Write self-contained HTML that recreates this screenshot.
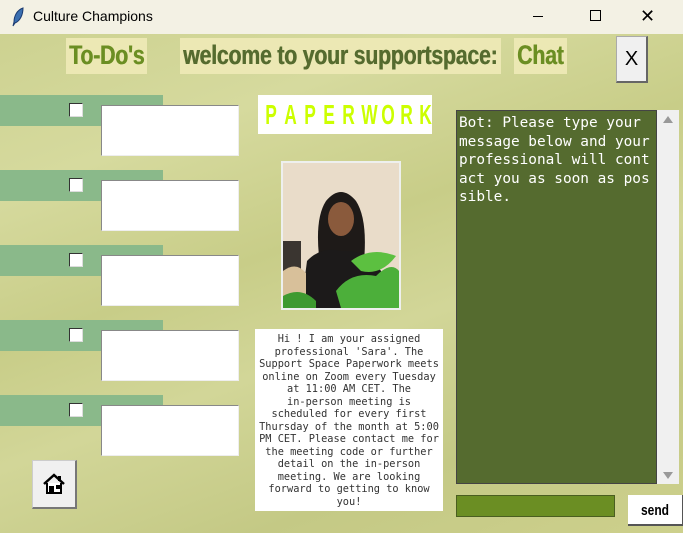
<!DOCTYPE html>
<html><head><meta charset="utf-8"><style>
*{margin:0;padding:0;box-sizing:border-box}
body{width:683px;height:533px;overflow:hidden;position:relative;font-family:"Liberation Sans",sans-serif;
background:linear-gradient(160deg,#cbd08e 0%,#d6da9e 25%,#c8cd88 45%,#d2d698 60%,#c4c985 80%,#cdd08c 100%)}
.a{position:absolute}
.tb{left:0;top:0;width:683px;height:34px;background:#f3f1e4;font-size:14px;color:#000}
.box{background:#ece8b4;height:36px;top:38px}
.lt{font-weight:bold;font-size:27px;line-height:36px;white-space:nowrap;transform:scaleX(0.79);transform-origin:left center;top:37px;letter-spacing:-0.3px;text-shadow:0.6px 0 0 currentColor}
.bar{left:0;width:163px;height:31px;background:#8ab98a}
.cb{left:69px;width:14px;height:14px;background:#fff;border:1px solid #333;border-right-color:#ddd;border-bottom-color:#ddd}
.en{left:101px;width:138px;height:51px;background:#fff;border:1px solid #888;border-right-color:#eee;border-bottom-color:#eee}
.mono{font-family:"DejaVu Sans Mono","Liberation Mono",monospace;white-space:pre}
.pw{display:flex;justify-content:space-between;left:263px;top:95px;width:166px;height:39px;align-items:center}
.pw span{display:inline-block;width:12px;font-weight:bold;font-size:28px;color:#ccff00;transform:scaleX(0.62);text-align:center}
</style></head><body>
<div class="a tb">
<svg class="a" style="left:11px;top:7px" width="14" height="20" viewBox="0 0 14 20"><path d="M12 1C6 3 3 9 3 15l-1 4 2-3c5-2 8-8 8-15z" fill="#3a6fb0" stroke="#1a3a70" stroke-width="1"/></svg>
<div class="a" style="left:33px;top:8px">Culture Champions</div>
<div class="a" style="left:533px;top:16px;width:10px;height:1px;background:#000"></div>
<div class="a" style="left:590px;top:10px;width:11px;height:11px;border:1px solid #000"></div>
<div class="a" style="left:640px;top:6px;font-size:18px;line-height:20px">✕</div>
</div>
<div class="a box" style="left:66px;width:81px"></div>
<div class="a box" style="left:180px;width:321px"></div>
<div class="a box" style="left:514px;width:53px"></div>
<div class="a lt" style="left:69px;color:#6b8e23">To-Do's</div>
<div class="a lt" style="left:183px;color:#556b2f">welcome to your supportspace:</div>
<div class="a lt" style="left:517px;color:#6b8e23">Chat</div>
<div class="a" style="left:616px;top:36px;width:32px;height:47px;background:#f0f0f0;border:1px solid #aaa;border-right:2px solid #666;border-bottom:2px solid #666;font-size:20px;text-align:center;line-height:44px">X</div>

<div class="a bar" style="top:95px"></div><div class="a cb" style="top:103px"></div><div class="a en" style="top:105px"></div>
<div class="a bar" style="top:170px"></div><div class="a cb" style="top:178px"></div><div class="a en" style="top:180px"></div>
<div class="a bar" style="top:245px"></div><div class="a cb" style="top:253px"></div><div class="a en" style="top:255px"></div>
<div class="a bar" style="top:320px"></div><div class="a cb" style="top:328px"></div><div class="a en" style="top:330px"></div>
<div class="a bar" style="top:395px"></div><div class="a cb" style="top:403px"></div><div class="a en" style="top:405px"></div>

<div class="a" style="left:32px;top:460px;width:45px;height:49px;background:#f0f0f0;border:1px solid #ccc;border-right:2px solid #777;border-bottom:2px solid #777">
<svg class="a" style="left:9px;top:11px" width="24" height="24" viewBox="0 0 24 24"><path d="M2 12L12 3L22 12" fill="none" stroke="#000" stroke-width="2.5"/><path d="M5 11V21H19V11" fill="#fff" stroke="#000" stroke-width="2"/><rect x="7" y="14" width="5" height="7" fill="#000"/><rect x="14" y="13" width="4" height="4" fill="#000"/><rect x="16" y="4" width="3" height="5" fill="#000"/></svg></div>

<div class="a" style="left:258px;top:95px;width:174px;height:39px;background:#fff"></div>
<div class="a pw"><span>P</span><span>A</span><span>P</span><span>E</span><span>R</span><span>W</span><span>O</span><span>R</span><span>K</span></div>

<svg class="a" style="left:281px;top:161px" width="120" height="149" viewBox="0 0 120 149">
<rect width="120" height="149" fill="#eef0ee"/>
<rect x="2" y="2" width="116" height="145" fill="#e9dcc9"/>
<rect x="2" y="80" width="18" height="67" fill="#3a3530"/>
<path d="M40 110Q32 60 45 40Q60 22 75 40Q88 60 82 110Z" fill="#1e1a18"/>
<ellipse cx="60" cy="58" rx="13" ry="17" fill="#8a5a3c"/>
<path d="M20 147L26 100Q40 85 60 90Q85 88 100 110L110 147Z" fill="#1c1a1a"/>
<path d="M2 110Q15 100 25 112L25 147H2Z" fill="#d8c09a"/>
<path d="M55 130Q70 110 95 115Q110 100 118 110V147H60Z" fill="#4caf3a"/>
<path d="M70 100Q90 85 115 95Q100 115 80 110Z" fill="#5cc040"/>
<path d="M2 135Q20 125 35 140V147H2Z" fill="#3e9a30"/>
</svg>

<div class="a mono" style="left:255px;top:329px;width:188px;height:182px;background:#fff;font-size:10.3px;line-height:12.5px;text-align:center;color:#333;padding-top:4px">Hi ! I am your assigned
professional 'Sara'. The
Support Space Paperwork meets
online on Zoom every Tuesday
at 11:00 AM CET. The
in-person meeting is
scheduled for every first
Thursday of the month at 5:00
PM CET. Please contact me for
the meeting code or further
detail on the in-person
meeting. We are looking
forward to getting to know
you!</div>

<div class="a mono" style="left:456px;top:110px;width:201px;height:374px;background:#556b2f;border:1px solid #444;color:#fff;font-size:14.4px;line-height:18.5px;padding:3px 2px">Bot: Please type your
message below and your
professional will cont
act you as soon as pos
sible.</div>
<div class="a" style="left:657px;top:110px;width:22px;height:374px;background:#f0f0f0"></div>
<div class="a" style="left:663px;top:116px;width:0;height:0;border:5px solid transparent;border-bottom:7px solid #999;border-top:0"></div>
<div class="a" style="left:663px;top:472px;width:0;height:0;border:5px solid transparent;border-top:7px solid #999;border-bottom:0"></div>

<div class="a" style="left:456px;top:495px;width:159px;height:22px;background:#6b8e23;border:1px solid #4a5e20"></div>
<div class="a" style="left:628px;top:495px;width:56px;height:31px;background:#fff;border-right:2px solid #555;border-bottom:2px solid #555"></div>
<div class="a" style="left:641px;top:495px;font-weight:bold;font-size:15px;line-height:31px;transform:scaleX(0.8);transform-origin:left">send</div>
</body></html>
